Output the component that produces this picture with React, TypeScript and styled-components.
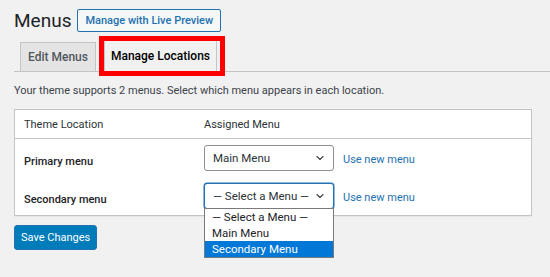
import { FC } from 'react';
import styled, { createGlobalStyle } from 'styled-components';
import { ChevronDown } from 'lucide-react';

const GlobalStyle = createGlobalStyle`
  html, body {
    margin: 0;
    padding: 0;
    background: #f1f1f1;
  }
  body {
    font-family: Roboto, "Noto Sans", sans-serif;
    font-size: 11px;
    color: #3c434a;
  }
  * {
    box-sizing: border-box;
  }
`;

const Page = styled.div`
  width: 550px;
  height: 277px;
  padding: 9px 18px 0 14px;
  overflow: hidden;
`;

const TitleRow = styled.div`
  display: flex;
  align-items: center;
  gap: 6px;
`;

const Title = styled.h1`
  margin: 0;
  font-size: 19px;
  font-weight: 400;
  color: #1d2327;
  line-height: 23px;
`;

const PreviewButton = styled.span`
  height: 23px;
  line-height: 21px;
  padding: 0 7px;
  border: 1px solid #2271b1;
  border-radius: 2px;
  background: #f6f7f7;
  color: #2271b1;
  font-size: 11px;
  font-weight: 500;
`;

const TabBar = styled.div`
  display: flex;
  align-items: flex-end;
  gap: 8px;
  margin: 0 -18px 0 0;
  padding-left: 6px;
  height: 40px;
  border-bottom: 1px solid #c3c4c7;
`;

const Tab = styled.div<{ $active?: boolean }>`
  position: relative;
  height: ${({ $active }) => ($active ? 32 : 30)}px;
  margin-bottom: -1px;
  padding: 0 ${({ $active }) => ($active ? 6 : 7)}px;
  display: flex;
  align-items: center;
  border: 1px solid #c3c4c7;
  border-bottom-color: ${({ $active }) => ($active ? '#f1f1f1' : '#c3c4c7')};
  background: ${({ $active }) => ($active ? '#f1f1f1' : '#e4e4e4')};
  color: ${({ $active }) => ($active ? '#000' : '#50575e')};
  font-size: 12px;
  font-weight: 500;
`;

const Highlight = styled.span`
  position: absolute;
  left: -6px;
  right: -9px;
  top: -5px;
  bottom: -5px;
  border: 5px solid #ff0000;
  pointer-events: none;
`;

const Intro = styled.p`
  margin: 11px 0 0;
  line-height: 16px;
  color: #3c434a;
`;

const LocationsTable = styled.div`
  margin-top: 10px;
  background: #fff;
  border: 1px solid #c3c4c7;
  box-shadow: 0 1px 1px rgba(0, 0, 0, 0.04);
`;

const Row = styled.div<{ $height: number; $header?: boolean }>`
  display: grid;
  grid-template-columns: 189px 1fr;
  align-items: center;
  height: ${({ $height }) => $height}px;
  border-bottom: ${({ $header }) => ($header ? '1px solid #c3c4c7' : 'none')};
`;

const HeadCell = styled.div<{ $flush?: boolean }>`
  padding-left: ${({ $flush }) => ($flush ? 0 : 9)}px;
  color: #2c3338;
`;

const LocationName = styled.div`
  padding: 6px 0 0 9px;
  color: #1d2327;
  font-weight: 500;
`;

const AssignCell = styled.div`
  display: flex;
  align-items: center;
  gap: 9px;
`;

const SelectBox = styled.div<{ $focused?: boolean }>`
  position: relative;
  width: 130px;
  height: 26px;
  padding: 0 7px 0 8px;
  display: flex;
  align-items: center;
  justify-content: space-between;
  white-space: nowrap;
  background: #fff;
  border: 1px solid ${({ $focused }) => ($focused ? '#2271b1' : '#8c8f94')};
  border-radius: 3px;
  box-shadow: ${({ $focused }) => ($focused ? '0 0 0 0.5px #2271b1' : 'none')};
  color: #2c3338;
  font-size: 11.5px;
`;

const OptionList = styled.div`
  position: absolute;
  left: -1px;
  top: 24px;
  width: 130px;
  background: #fff;
  border: 1px solid #7a7a7a;
  z-index: 2;
`;

const Option = styled.div<{ $selected?: boolean }>`
  height: 16px;
  line-height: 16px;
  padding-left: 7px;
  background: ${({ $selected }) => ($selected ? '#0078d7' : '#fff')};
  color: ${({ $selected }) => ($selected ? '#fff' : '#1d2327')};
  font-size: 11.5px;
  white-space: nowrap;
`;

const NewMenuLink = styled.a`
  margin-top: 2px;
  color: #2271b1;
  text-decoration: none;
  font-size: 11px;
`;

const SaveButton = styled.button`
  margin-top: 9px;
  height: 25px;
  padding: 0 6px;
  border: 1px solid #2271b1;
  border-radius: 3px;
  background: #007cba;
  color: #fff;
  font-family: inherit;
  font-size: 11px;
`;

const options = ['— Select a Menu —', 'Main Menu', 'Secondary Menu'];

const App: FC = () => {
  return (
    <Page>
      <GlobalStyle />
      <TitleRow>
        <Title>Menus</Title>
        <PreviewButton>Manage with Live Preview</PreviewButton>
      </TitleRow>
      <TabBar>
        <Tab>Edit Menus</Tab>
        <Tab $active>
          Manage Locations
          <Highlight />
        </Tab>
      </TabBar>
      <Intro>Your theme supports 2 menus. Select which menu appears in each location.</Intro>
      <LocationsTable>
        <Row $height={29} $header>
          <HeadCell>Theme Location</HeadCell>
          <HeadCell $flush>Assigned Menu</HeadCell>
        </Row>
        <Row $height={38}>
          <LocationName>Primary menu</LocationName>
          <AssignCell>
            <SelectBox>
              Main Menu
              <ChevronDown size={12} strokeWidth={2.2} color="#3c434a" />
            </SelectBox>
            <NewMenuLink href="#">Use new menu</NewMenuLink>
          </AssignCell>
        </Row>
        <Row $height={38}>
          <LocationName>Secondary menu</LocationName>
          <AssignCell>
            <SelectBox $focused>
              — Select a Menu —
              <ChevronDown size={12} strokeWidth={2.2} color="#3c434a" />
              <OptionList>
                {options.map((o) => (
                  <Option key={o} $selected={o === 'Secondary Menu'}>
                    {o}
                  </Option>
                ))}
              </OptionList>
            </SelectBox>
            <NewMenuLink href="#">Use new menu</NewMenuLink>
          </AssignCell>
        </Row>
      </LocationsTable>
      <SaveButton>Save Changes</SaveButton>
    </Page>
  );
};

export default App;
